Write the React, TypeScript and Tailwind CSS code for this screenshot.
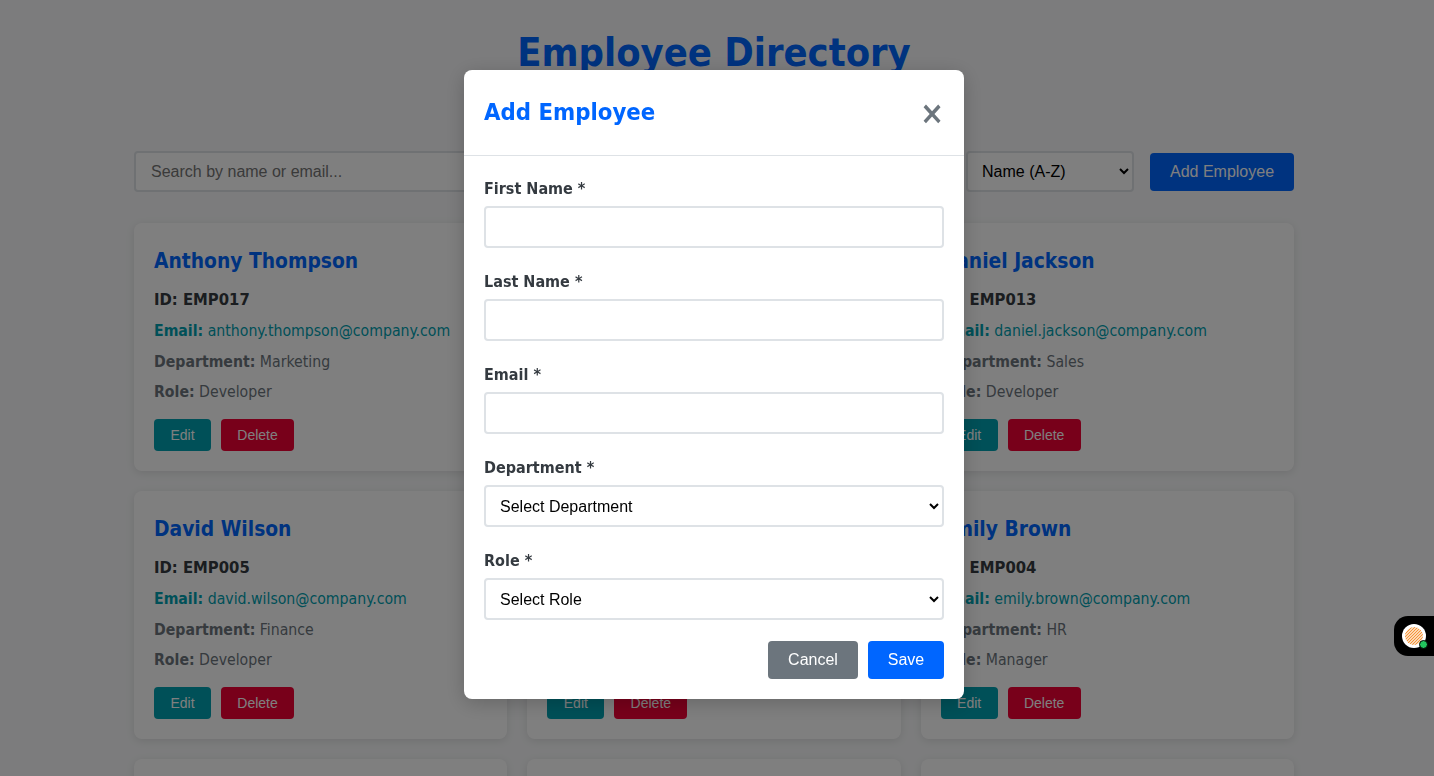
const cards = [
  { name: "Anthony Thompson", id: "EMP017", email: "anthony.thompson@company.com", dept: "Marketing", role: "Developer" },
  { name: "Christopher Lee", id: "EMP009", email: "christopher.lee@company.com", dept: "Sales", role: "Analyst" },
  { name: "Daniel Jackson", id: "EMP013", email: "daniel.jackson@company.com", dept: "Sales", role: "Developer" },
  { name: "David Wilson", id: "EMP005", email: "david.wilson@company.com", dept: "Finance", role: "Developer" },
  { name: "Emily Anderson", id: "EMP012", email: "emily.anderson@company.com", dept: "IT", role: "Designer" },
  { name: "Emily Brown", id: "EMP004", email: "emily.brown@company.com", dept: "HR", role: "Manager" },
  { name: "James Taylor", id: "EMP008", email: "james.taylor@company.com", dept: "IT", role: "Manager" },
  { name: "Jane Smith", id: "EMP002", email: "jane.smith@company.com", dept: "Marketing", role: "Manager" },
  { name: "John Doe", id: "EMP001", email: "john.doe@company.com", dept: "IT", role: "Developer" },
];

const heading = "font-['DejaVu_Sans_Condensed','DejaVu_Sans',sans-serif]";
const ui = "font-['Liberation_Sans',Arial,sans-serif]";

function Card({ c }: { c: (typeof cards)[number] }) {
  return (
    <div className={`h-[248px] rounded-lg bg-white p-5 shadow-[0_2px_8px_rgba(0,0,0,0.1)] ${heading}`}>
      <h3 className="mb-[9px] text-[20.8px] leading-[36px] font-bold text-[#0066ff]">{c.name}</h3>
      <p className="mb-[6.5px] text-[16.5px] leading-[24.3px] font-bold text-[#343a40]">ID: {c.id}</p>
      <p className="mb-[6.5px] text-[15.7px] leading-[24.3px] text-[#00a0b0]"><b>Email:</b> {c.email}</p>
      <p className="mb-[6.5px] text-[15.7px] leading-[24.3px] text-[#6c757d]"><b>Department:</b> {c.dept}</p>
      <p className="text-[15.7px] leading-[24.3px] text-[#6c757d]"><b>Role:</b> {c.role}</p>
      <div className={`mt-[14px] flex gap-2.5 ${ui}`}>
        <button className="h-8 w-[57px] rounded bg-[#00a0b0] text-sm text-white">Edit</button>
        <button className="h-8 w-[73px] rounded bg-[#f00035] text-sm text-white">Delete</button>
      </div>
    </div>
  );
}

function Field({ label, children }: { label: string; children: React.ReactNode }) {
  return (
    <div className="mb-[21px]">
      <label className={`mb-1 block text-base leading-[26px] font-bold text-[#343a40] ${heading}`}>{label}</label>
      {children}
    </div>
  );
}

const inputCls = "block h-[42px] w-full rounded border-2 border-[#dee2e6] bg-white px-3 text-base outline-none";
const selectCls = "block h-[42px] w-full rounded border-2 border-[#dee2e6] bg-white pr-[9px] pl-2.5 text-base text-black outline-none font-['Liberation_Sans',Arial,sans-serif]";

export default function App() {
  return (
    <div className="relative h-[776px] overflow-hidden bg-[#f8f9fa]">
      <div className="w-[1428px]">
        <div className="mx-auto w-[1160px]">
          <h1 className={`pt-5 text-center text-[39.5px] leading-[64px] font-bold text-[#0066ff] ${heading}`}>Employee Directory</h1>
          <div className={`mt-[67px] mb-[31px] flex items-center gap-4 ${ui}`}>
            <input placeholder="Search by name or email..." className="h-[41px] min-w-0 flex-1 rounded border-2 border-[#dee2e6] bg-white px-[15px] text-base placeholder:text-[#757575]" />
            <select className="h-[41px] w-[168px] rounded border-2 border-[#dee2e6] bg-white pr-[9px] pl-2.5 text-base text-black">
              <option>Name (A-Z)</option>
            </select>
            <button className="h-[38px] w-36 rounded bg-[#0066ff] text-base text-white">Add Employee</button>
          </div>
          <div className="grid grid-cols-3 gap-5">
            {cards.map((c) => <Card key={c.id} c={c} />)}
          </div>
        </div>
      </div>

      <div className="fixed inset-0 bg-black/50" />

      <div className="fixed top-[70px] left-[464px] w-[500px] overflow-hidden rounded-lg bg-white shadow-[0_4px_20px_rgba(0,0,0,0.2)]">
        <div className="flex h-[86px] items-center justify-between border-b border-[#dee2e6] px-5">
          <h2 className={`text-[23.7px] font-bold text-[#0066ff] ${heading}`}>Add Employee</h2>
          <button className={`text-[32px] leading-none font-bold text-[#6c757d] ${heading}`}>×</button>
        </div>
        <div className="px-5 pt-5 pb-5">
          <Field label="First Name *"><input className={inputCls} /></Field>
          <Field label="Last Name *"><input className={inputCls} /></Field>
          <Field label="Email *"><input className={inputCls} /></Field>
          <Field label="Department *">
            <select className={selectCls}><option>Select Department</option></select>
          </Field>
          <Field label="Role *">
            <select className={selectCls}><option>Select Role</option></select>
          </Field>
          <div className={`flex justify-end gap-2.5 ${ui}`}>
            <button className="h-[38px] w-[90px] rounded bg-[#6c757d] text-base text-white">Cancel</button>
            <button className="h-[38px] w-[76px] rounded bg-[#0066ff] text-base text-white">Save</button>
          </div>
        </div>
      </div>

      <div className="fixed top-[616px] right-0 flex h-10 w-10 items-center rounded-l-[14px] bg-black pl-[8px]">
        <div className="relative h-6 w-6 rounded-full bg-white">
          <svg viewBox="0 0 24 24" className="h-6 w-6">
            <defs>
              <clipPath id="c"><circle cx="12" cy="12" r="9" /></clipPath>
            </defs>
            <circle cx="12" cy="12" r="9" fill="#fcd9b4" />
            <g clipPath="url(#c)" stroke="#f5923a" strokeWidth="1">
              <path d="M0 7L7 0M0 10L10 0M0 13L13 0M1 15L15 1M3 16L16 3M4 18L18 4M6 19L19 6M7 21L21 7M9 22L22 9M11 23L23 11M14 24L24 14" />
            </g>
          </svg>
          <div className="absolute right-[-2px] bottom-[-1px] h-[9px] w-[9px] rounded-full border border-black bg-[#22c55e]" />
        </div>
      </div>
    </div>
  );
}
